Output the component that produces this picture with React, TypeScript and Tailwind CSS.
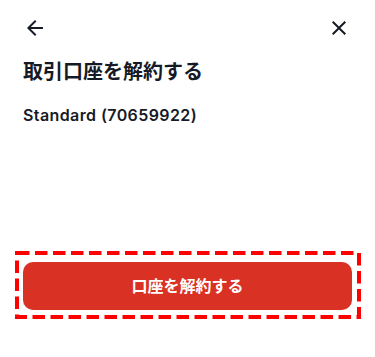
import React from "react";

const ArrowBack = () => (
  <svg width="24" height="24" viewBox="0 0 24 24" fill="#161a26" aria-hidden="true">
    <path d="M20 11H7.83l5.59-5.59L12 4l-8 8 8 8 1.41-1.41L7.83 13H20v-2z" />
  </svg>
);

const CloseIcon = () => (
  <svg width="24" height="24" viewBox="0 0 24 24" fill="#161a26" aria-hidden="true">
    <path d="M19 6.41 17.59 5 12 10.59 6.41 5 5 6.41 10.59 12 5 17.59 6.41 19 12 13.41 17.59 19 19 17.59 13.41 12z" />
  </svg>
);

export default function App() {
  return (
    <div
      className="w-[375px] h-[357px] bg-white flex flex-col text-[#161a26]"
      style={{ fontFamily: 'Inter, "Noto Sans CJK JP", sans-serif' }}
    >
      <div className="flex items-center justify-between pl-[23px] pr-[24px] pt-[16px]">
        <button className="w-6 h-6 flex items-center justify-center">
          <ArrowBack />
        </button>
        <button className="w-6 h-6 flex items-center justify-center">
          <CloseIcon />
        </button>
      </div>
      <h1 className="mt-[18px] px-[23px] text-[20px] leading-[28px] font-bold">
        取引口座を解約する
      </h1>
      <p className="mt-[17px] px-[23px] text-[16px] leading-[24px] font-semibold tracking-[0.4px]">
        Standard (70659922)
      </p>
      <div className="relative mt-auto mb-[38px] ml-[15px] w-[346px] h-[68px] pt-[11px] pl-[8px] pr-[9px]">
        <button className="w-[329px] h-[48px] rounded-[10px] bg-[#d93124] text-white text-[16px] font-bold flex items-center justify-center">
          口座を解約する
        </button>
        <svg
          className="absolute inset-0 pointer-events-none"
          width="346"
          height="68"
          viewBox="0 0 346 68"
          aria-hidden="true"
        >
          <rect
            x="2"
            y="2"
            width="342"
            height="64"
            fill="none"
            stroke="#ff0000"
            strokeWidth="4"
            strokeDasharray="12.5 5.5"
          />
        </svg>
      </div>
    </div>
  );
}
